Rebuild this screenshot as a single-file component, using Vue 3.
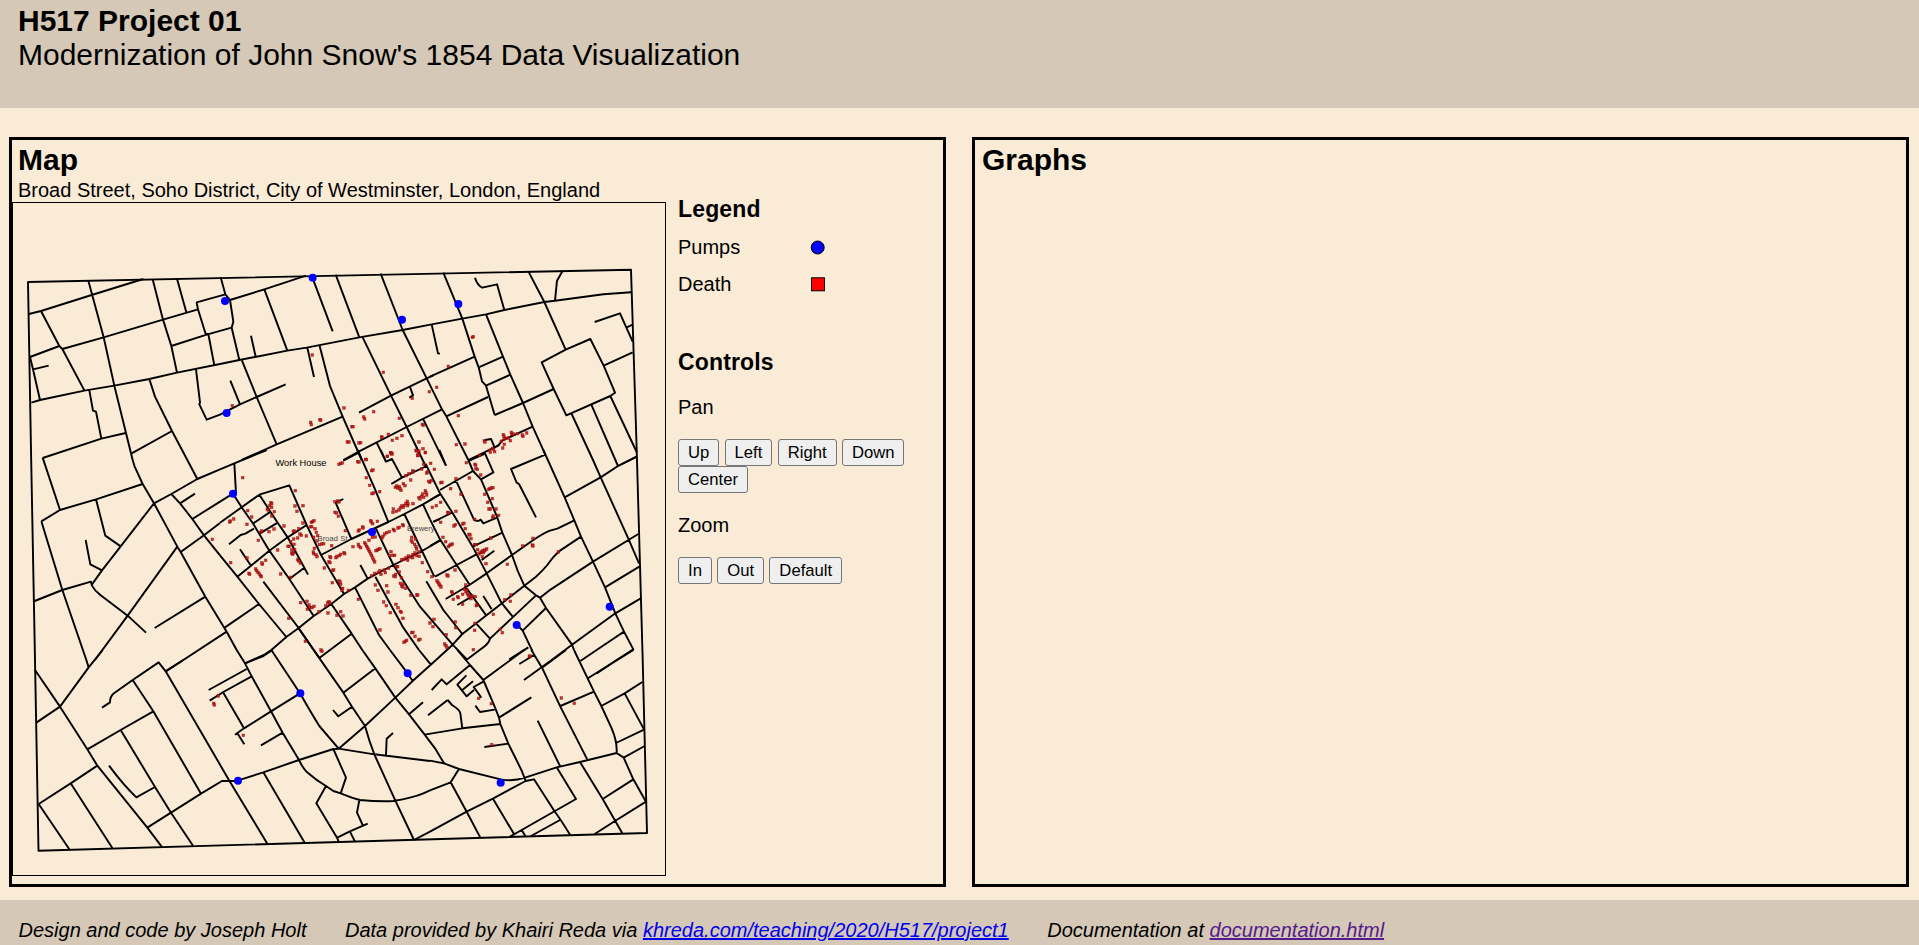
<script setup>
// Street survey is stored in sheets: each sheet has an origin in map pixels and thirds-of-a-pixel units.
const sheets = [
  {
    x: 10, y: 250,
    streets: 'M57,192 L93,183 L245,135 L400,87 M235,92 L281,262 L313,407 L368,630 M93,183 L148,288 L157,297 L223,421 M60,321 L148,288 M157,297 L281,262 L459,209 L564,178 M60,321 L69,358 L90,450 M69,358 L116,347 M64,458 L90,450 L223,422 L313,407 L418,387 L501,368 L630,342 M428,88 L459,209 L484,288 L501,368 M501,86 L529,187 M646,133 L560,157 L564,178 L587,252 L595,252 L613,346 M484,288 L590,254 L665,233 M558,358 L570,457 L568,463 L590,509 L630,494 M418,387 L435,440 L486,543 L532,630 L562,687 M365,610 L486,543 M238,421 L249,482 L258,485 L274,566 M98,624 L274,566 L347,549',
    deaths: '',
    pumps: []
  },
  {
    x: 220, y: 250,
    streets: 'M30,150 L133,118 L258,77 M2,82 L16,133 L30,150 L40,215 L35,233 L58,330 M133,118 L202,302 M93,257 L107,320 M0,342 L58,330 L202,302 L260,293 L418,262 L548,240 L635,223 M277,82 L338,244 M347,74 L418,262 M482,71 L548,240 L620,385 L666,478 M262,293 L282,381 M299,288 L330,408 L368,500 L425,630 M66,332 L110,441 L170,583 M31,392 L60,463 M0,494 L60,463 L110,441 L197,403 M65,630 L170,583 L368,500 M417,488 L513,437 L620,385 L640,376 M428,262 L513,437 L560,531 L617,648 M570,411 L579,436 L568,443 M370,630 L416,605 L560,531 L666,478 M610,508 L678,647 M470,578 L498,635',
    deaths: '277,315 490,367 37,467 372,474 577,445 628,425 650,412 461,485 431,501 434,507 272,517 274,524 300,509 302,511 396,530 399,530 538,505 382,576 387,576 417,579 422,578 485,560 486,563 505,553 517,571 531,565 546,557 607,523 610,526 597,576 588,601 609,596 616,608 593,617 596,614 502,619 512,608 515,611 438,628',
    pumps: [[278, 83], [15, 153], [546, 209], [20, 489]]
  },
  {
    x: 430, y: 250,
    streets: 'M40,68 L97,206 L134,320 L146,352 L156,394 L168,407 L194,495 M5,223 L97,206 L168,193 L223,180 L343,156 L375,152 L520,133 L603,127 M135,83 Q142,106 157,113 L201,103 L223,180 M295,64 L343,156 L407,299 M398,62 L381,92 L375,152 M494,216 L570,190 L608,275 M589,233 L606,225 M335,337 L407,299 L481,267 L521,347 L555,428 L541,438 L409,496 L371,417 Z M521,347 L608,307 M371,417 L279,459 L194,495 M168,193 L219,320 L241,374 L279,459 L308,530 L346,614 M146,352 L219,320 M168,407 L241,374 M0,380 L134,320 M36,478 L49,499 L115,630 M49,499 L174,441 M5,223 L24,310 L30,311 M115,630 L205,587 L216,572 L308,530 M165,570 L183,567 L194,593 L205,585 M425,492 L489,630 L512,682 M484,464 L564,648 M541,438 L620,606 M564,648 L620,620',
    deaths: '127,262 130,260 55,349 85,497 79,584 105,582 163,572 165,576 149,616 178,601 181,607 188,595 190,598 194,605 218,594 223,583 214,574 223,567 227,565 220,554 222,559 236,564 241,572 244,547 245,553 250,552 262,551 277,555 279,559 290,549',
    pumps: [[85, 162]]
  },
  {
    x: 10, y: 450,
    streets: 'M98,23 L150,180 M94,214 L150,180 L258,148 L398,102 M94,214 L157,420 L229,630 L236,652 M258,148 L286,257 L332,289 M227,270 L241,343 L276,361 M74,453 L157,420 L243,395 L246,407 Q255,424 270,434 L353,497 L408,548 M246,403 L276,361 L332,289 L432,160 M368,30 L374,50 L398,102 L432,160 L502,290 L512,306 L586,440 L650,545 M432,160 L484,132 L562,87 L630,58 M484,132 L510,160 L547,207 L582,256 L630,316 M510,160 L555,131 M547,207 L665,133 M512,306 L582,256 L630,219 M502,290 L353,497 L255,630 M434,534 L586,440 M467,664 L520,630 L650,545',
    deaths: '607,268',
    pumps: []
  },
  {
    x: 220, y: 450,
    streets: 'M0,58 L43,40 L140,0 M43,40 L48,130 M39,131 L65,172 L100,222 L148,302 L208,387 L281,498 M0,218 L65,172 L118,134 L208,106 L260,225 L303,315 L372,432 M118,134 L150,183 L173,218 L203,262 L253,353 L264,374 M100,220 L152,185 M27,283 L62,255 L76,251 L102,236 M120,250 L173,218 M60,298 L93,347 M52,380 L93,347 L148,302 L203,262 L260,225 M0,316 L52,380 L117,462 L199,561 M208,387 L253,353 M130,395 L236,534 L298,624 M15,532 L117,462 M20,545 L50,600 M75,640 L135,613 L154,600 L199,561 L236,534 L281,498 L334,462 L372,432 L405,412 L443,386 L520,345 L606,303 L660,272 M334,462 L395,551 L427,600 M298,624 L395,551 M405,412 L477,555 L510,600 M303,315 L394,267 L505,216 L553,192 L609,163 L660,133 M370,147 L347,158 L394,267 M370,32 L416,8 M413,0 L463,113 L505,216 M482,0 L498,35 L516,27 L546,83 M514,102 L546,83 L620,48 M617,42 L660,130 M421,345 L443,386 M466,232 L520,345 L600,470 L698,584 M466,380 L550,533 L597,600 M553,192 L606,303 L643,380 M609,163 L630,208 M640,215 L660,207',
    deaths: '68,83 83,182 81,223 95,201 29,216 31,213 41,207 32,338 115,271 122,247 125,243 147,245 162,237 142,178 145,180 149,167 153,158 155,161 155,172 163,185 155,198 192,228 226,122 225,168 249,167 231,184 249,219 236,236 220,244 223,243 240,252 244,256 259,258 233,264 221,267 204,289 208,289 212,275 222,283 215,300 215,310 221,308 218,313 224,299 173,300 233,329 236,333 241,339 81,324 137,331 126,339 127,343 87,370 89,373 107,357 110,362 114,367 118,372 122,377 124,380 182,372 212,382 274,217 278,215 282,212 272,230 275,230 285,236 289,247 281,262 293,257 291,273 298,284 305,282 311,281 335,287 283,295 280,306 281,311 288,314 291,320 313,354 341,360 338,361 327,335 330,320 332,323 330,338 348,323 351,319 358,317 362,313 372,308 374,311 337,398 357,393 360,396 362,403 368,415 366,420 385,421 345,155 354,153 357,156 345,187 350,189 355,199 376,242 357,43 362,40 367,39 413,35 417,36 438,29 455,62 459,60 439,83 449,106 456,131 461,129 479,125 502,19 513,9 516,12 452,212 454,216 458,221 472,214 415,243 418,240 428,231 429,234 399,290 415,283 417,289 422,293 447,271 457,262 434,278 437,283 440,289 443,294 446,300 449,305 452,311 455,317 458,324 461,330 464,336 466,261 468,302 472,300 476,298 480,296 486,264 489,259 494,252 500,248 508,245 520,238 523,242 534,234 538,232 548,224 550,227 509,317 513,305 518,316 524,316 520,177 519,187 529,184 537,180 541,174 545,168 550,172 553,166 558,160 562,154 564,161 563,167 579,161 526,112 530,108 533,114 538,110 540,116 543,121 550,101 555,107 572,90 558,77 567,71 579,62 578,66 605,57 611,43 620,69 623,66 643,58 632,40 594,15 590,3 597,3 616,7 629,97 634,92 626,94 597,143 600,147 604,139 608,132 611,142 616,122 618,128 620,135 637,172 649,167 575,262 574,272 577,277 586,267 584,283 588,290 590,297 545,329 552,328 558,323 563,331 565,318 572,321 578,314 578,323 585,309 590,317 597,306 598,319 607,338 623,365 636,380 506,355 493,360 496,368 480,362 475,367 483,373 464,370 455,377 530,350 533,350 538,366 521,378 526,380 527,373 544,383 541,400 545,408 550,402 548,411 557,415 572,436 590,435 593,435 415,448 466,405 474,421 500,407 504,426 491,456 499,467 511,488 528,463 534,473 541,484 544,487 549,505 480,540 575,548 579,547 585,559 596,570 600,568 552,577 556,574 560,571 642,508 630,519 639,530 242,458 261,454 267,465 262,478 270,472 276,473 282,469 297,485 323,459 327,455 329,459 317,468 324,489 351,496 362,485 369,498 206,505 256,574 303,600 306,604',
    pumps: [[39, 131], [456, 246]]
  },
  {
    x: 430, y: 450,
    streets: 'M28,0 L48,47 M115,30 L129,63 L153,88 L201,200 L217,248 L246,315 Q262,365 283,407 M118,32 L167,10 M165,10 L190,67 L153,88 M30,120 L129,63 M0,150 L30,133 M30,130 L66,186 L128,290 L170,370 L214,458 L248,500 M78,92 L133,211 L145,213 L152,209 L160,220 L201,203 M10,216 L66,188 M0,208 L30,268 L80,345 L118,403 M0,288 L30,270 M128,290 L217,248 M47,447 L118,405 L170,370 L246,315 L310,270 Q340,250 360,242 L382,236 L433,211 M15,380 L80,345 L138,314 M155,330 L193,302 M82,465 L125,440 M105,408 L167,494 M160,438 L185,478 M340,0 L404,142 L433,211 L453,260 L489,335 L525,412 L556,490 L582,545 L610,598 L560,630 L500,670 M346,14 L243,57 L260,98 L267,102 L318,202 M404,142 L512,82 L564,48 L620,20 M512,82 L596,268 L627,340 M453,260 L390,302 Q370,318 352,345 Q338,362 318,380 L283,407 L214,461 L97,552 L68,584 L18,630 M330,443 Q360,418 390,400 L489,335 L625,252 M283,407 L318,436 L330,443 L348,474 L426,584 L432,600 M318,436 L180,566 Q178,577 165,588 L112,628 M68,584 L112,630 M138,520 L180,566 M278,542 L348,474 M262,525 L278,542 L308,605 M238,628 L295,592 M525,412 L628,350 M282,690 L365,630 L426,584 L556,490 L631,446 M451,633 L540,573 L582,545 M-11,394 L40,480 L97,552',
    deaths: '33,98 36,97 62,116 78,86 118,84 93,133 109,38 135,43 137,46 138,56 142,58 152,75 176,118 180,116 184,114 189,113 164,133 187,146 173,157 177,177 181,177 198,177 206,196 188,202 190,198 134,208 32,157 32,217 53,187 56,189 78,184 72,228 76,224 98,222 102,220 106,236 117,253 120,255 123,266 133,284 138,284 143,299 183,264 39,262 47,275 55,290 59,286 63,284 67,282 147,312 151,308 155,306 158,302 160,308 165,300 170,297 157,320 163,303 168,341 232,343 278,288 309,265 307,285 309,288 385,306 75,360 51,375 54,378 21,392 24,397 27,402 30,406 33,411 107,405 103,418 108,425 112,431 115,436 118,440 110,420 127,438 123,446 136,440 98,433 98,463 83,440 85,443 65,425 67,429 70,448 139,467 141,464 190,493 224,449 243,435 241,454 135,520 134,541 76,516 77,533 49,554 44,582 48,587 51,592 211,538 217,548 130,599 298,620 300,618',
    pumps: [[539, 470], [260, 525]]
  },
  {
    x: 10, y: 650,
    streets: 'M75,60 L150,170 L232,298 L262,347 L412,533 L455,590 M278,0 L236,52 L150,170 L79,218 M276,173 L300,157 Q300,139 312,130 L368,90 L446,37 L467,64 L658,392 M467,64 L520,30 M368,90 L430,184 L573,431 M232,298 L332,240 L430,184 M332,240 L435,411 L483,488 L549,587 M435,411 L379,442 Q340,405 297,347 M86,462 L182,400 L262,347 M86,462 L178,598 M182,400 L307,594 M412,533 L483,488 L573,431 L636,393 L682,393 M596,120 L710,57 M599,152 L640,126 L725,79',
    deaths: '611,160 613,165 625,138',
    pumps: []
  },
  {
    x: 220, y: 650,
    streets: 'M50,0 L75,40 L95,79 L153,184 L188,248 L237,330 Q250,358 265,370 Q290,392 318,408 L340,423 L362,430 Q400,445 420,450 Q475,455 520,453 Q580,443 610,430 L630,421 M75,40 L130,18 L154,2 M154,0 L240,130 Q280,200 298,228 L356,296 M45,254 L72,235 L153,184 L240,130 M10,128 L72,235 M52,250 L73,283 M123,286 L188,248 M52,392 L130,367 L237,330 L340,297 L356,296 L463,313 L630,333 M28,392 L142,581 M130,367 L254,578 M340,297 L378,383 L362,430 M318,408 L289,460 L352,565 L357,577 M418,450 L411,488 L428,525 M352,563 L388,545 L443,521 M390,545 L405,575 M235,-66 L297,23 L370,128 L396,170 L435,228 Q448,275 463,313 L526,452 L582,570 M370,128 L466,55 M339,180 L355,199 L396,170 M427,0 L466,55 L526,143 L567,193 L614,254 L645,295 L672,340 M356,296 L435,228 L526,143 L578,93 L648,30 M510,0 L563,70 L578,93 M597,0 L632,43 M567,193 L609,157 M624,196 L683,150 M614,254 L727,235 M498,316 L500,266 L519,249 M582,570 L630,545',
    deaths: '70,256',
    pumps: [[563, 70], [241, 130], [54, 392]]
  },
  {
    x: 430, y: 650,
    streets: 'M82,0 L120,45 L160,90 L194,170 L207,203 L211,222 L235,281 Q262,335 275,362 L287,393 M5,120 L35,88 L50,103 L120,45 M109,76 L82,104 L110,139 L132,120 M97,120 L129,94 M160,95 L131,111 L154,143 M136,167 L150,186 L194,179 M160,90 L282,0 M268,42 L312,15 M304,0 L336,53 L391,170 L472,329 M336,53 L408,0 M207,203 L304,142 M53,150 L66,165 Q90,180 91,190 L97,235 L211,222 M163,291 L235,281 M0,332 L42,340 L87,357 L212,388 Q250,395 285,383 L380,352 L450,336 L560,309 M87,357 L62,397 L0,421 M62,397 L110,485 L151,563 M0,545 L110,485 L190,445 L287,393 L312,388 L375,486 Q390,505 421,556 M188,445 L252,552 M380,352 L438,447 L375,483 L275,540 L240,560 M275,540 L286,558 M303,558 L390,510 M323,212 L391,350 M450,336 L518,447 L577,550 M560,309 L581,323 L610,388 L648,455 M518,447 L610,388 M494,552 L555,513 L648,455 M432,0 L492,125 L514,168 L545,235 Q562,275 560,309 M391,168 L492,125 M475,84 L610,0 M514,168 L584,130 L637,96 M584,130 L642,238 M558,279 L642,239 M581,323 L644,288',
    deaths: '146,145 184,161 394,144 433,160 185,284',
    pumps: [[212, 398]]
  }
].map((s) => ({
  ...s,
  deaths: s.deaths ? s.deaths.split(' ').map((p) => p.split(',').map(Number)) : []
}))

const boundary = 'M28,282 L631,269.7 L636.7,450 L642.7,660 L647,833 L38.5,850.7 L35,660 L31,450 Z'
const panButtons = ['Up', 'Left', 'Right', 'Down', 'Center']
const zoomButtons = ['In', 'Out', 'Default']
</script>

<template>
  <div class="page">
    <header class="header">
      <h1>H517 Project 01</h1>
      <p>Modernization of John Snow's 1854 Data Visualization</p>
    </header>

    <main class="main">
      <section class="panel">
        <h2>Map</h2>
        <p class="place">Broad Street, Soho District, City of Westminster, London, England</p>
        <div class="map-row">
          <svg class="map" viewBox="13 203 652 672">
            <path class="street" :d="boundary" />
            <g v-for="(s, i) in sheets" :key="'s' + i" :transform="`translate(${s.x} ${s.y}) scale(0.33333)`">
              <path class="street sheet" :d="s.streets" />
            </g>
            <text class="label-large" x="275.5" y="465.5" textLength="51">Work House</text>
            <text class="label-small" x="317.5" y="541" textLength="30">Broad St</text>
            <text class="label-small" x="407" y="531" textLength="27.5">Brewery</text>
            <g v-for="(s, i) in sheets" :key="'d' + i" :transform="`translate(${s.x} ${s.y}) scale(0.33333)`">
              <rect v-for="(d, j) in s.deaths" :key="j" class="death" :x="d[0] - 4" :y="d[1] - 4" width="8" height="8" />
            </g>
            <g v-for="(s, i) in sheets" :key="'p' + i" :transform="`translate(${s.x} ${s.y}) scale(0.33333)`">
              <circle v-for="(p, j) in s.pumps" :key="j" class="pump" :cx="p[0]" :cy="p[1]" r="12" />
            </g>
          </svg>

          <aside class="side">
            <h3>Legend</h3>
            <div class="legend-row">
              <span>Pumps</span>
              <svg width="16" height="16"><circle cx="7.7" cy="7.5" r="6.5" fill="blue" stroke="black" /></svg>
            </div>
            <div class="legend-row">
              <span>Death</span>
              <svg width="16" height="16"><rect x="1.5" y="0.8" width="13" height="13" fill="red" stroke="black" /></svg>
            </div>
            <h3 class="controls">Controls</h3>
            <p class="group">Pan</p>
            <div class="buttons">
              <button v-for="b in panButtons" :key="b" type="button">{{ b }}</button>
            </div>
            <p class="group zoom">Zoom</p>
            <div class="buttons">
              <button v-for="b in zoomButtons" :key="b" type="button">{{ b }}</button>
            </div>
          </aside>
        </div>
      </section>

      <section class="panel graphs">
        <h2>Graphs</h2>
      </section>
    </main>

    <footer class="footer">
      <span>Design and code by Joseph Holt</span>
      <span>Data provided by Khairi Reda via <a class="link" href="#">khreda.com/teaching/2020/H517/project1</a></span>
      <span>Documentation at <a class="visited" href="#">documentation.html</a></span>
    </footer>
  </div>
</template>

<style>
body {
  margin: 0;
  background: #faebd7;
  overflow: hidden;
}
</style>

<style scoped>
.page {
  display: flex;
  flex-direction: column;
  height: 945px;
  overflow: hidden;
  background: #faebd7;
  color: #000;
  font-family: "Liberation Sans", Arial, sans-serif;
  font-size: 20px;
  line-height: 23px;
}
h1, h2, h3, p {
  margin: 0;
}
.header {
  box-sizing: border-box;
  height: 108px;
  padding: 4px 18px 0;
  background: #d5c8b6;
  font-size: 30px;
  line-height: 34px;
}
h1, h2 {
  font-size: 30px;
  line-height: 34px;
}
.main {
  display: grid;
  grid-template-columns: 937px 937px;
  gap: 26px;
  height: 750px;
  margin: 29px 9px 0;
}
.panel {
  box-sizing: border-box;
  border: 3px solid #000;
}
.panel h2 {
  padding: 3px 6px 2px;
}
.graphs h2 {
  padding-left: 7px;
}
.place {
  padding-left: 6px;
}
.map-row {
  display: flex;
  gap: 12px;
}
.map {
  display: block;
  box-sizing: border-box;
  width: 654px;
  height: 674px;
  border: 1px solid #000;
}
.street {
  fill: none;
  stroke: #000;
  stroke-width: 1.9;
  stroke-linejoin: round;
}
.sheet {
  stroke-width: 5.8;
}
.death {
  fill: #c81414;
  fill-opacity: 0.85;
  stroke: #700;
  stroke-opacity: 0.55;
  stroke-width: 2;
}
.pump {
  fill: #00f;
}
.label-large {
  font-size: 9.3px;
}
.label-small {
  font-size: 7.5px;
  fill: #444;
}
.side {
  width: 250px;
  margin-top: -6px;
}
h3 {
  font-size: 23px;
  line-height: 26px;
  letter-spacing: 0.15px;
}
.legend-row {
  display: flex;
  align-items: center;
  height: 23px;
  margin-top: 14px;
}
.legend-row span {
  width: 132px;
}
.controls {
  margin-top: 53px;
}
.group {
  margin: 21px 0 20px;
}
.buttons {
  display: flex;
  flex-wrap: wrap;
  column-gap: 5.3px;
}
.zoom {
  margin-top: 21px;
}
button {
  box-sizing: border-box;
  height: 27px;
  padding: 0 9px;
  border: 1px solid #767676;
  border-radius: 3px;
  background: #efefef;
  color: #000;
  font-family: inherit;
  font-size: 16.67px;
  line-height: 23px;
}
.footer {
  display: flex;
  gap: 38.5px;
  height: 45px;
  margin-top: 13px;
  padding: 19px 18.5px 0;
  box-sizing: border-box;
  background: #d5c8b6;
  font-style: italic;
}
.link {
  color: #0000ee;
}
.visited {
  color: #551a8b;
}
</style>
